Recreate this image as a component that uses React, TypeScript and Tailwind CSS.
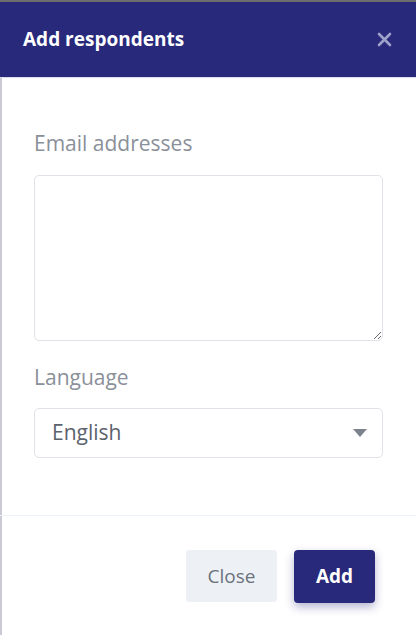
import React from 'react'

const font = { fontFamily: '"Open Sans", Lato, sans-serif' }

const CloseIcon = () => (
  <svg width="15" height="15" viewBox="0 0 15 15" className="text-[#9ea1c9]">
    <path d="M2 2 L13 13 M13 2 L2 13" stroke="currentColor" strokeWidth="2.6" strokeLinecap="round" />
  </svg>
)

const Caret = () => (
  <svg width="14" height="8" viewBox="0 0 14 8" className="text-[#7c838e]">
    <path d="M0 0 H14 L7 8 Z" fill="currentColor" />
  </svg>
)

const App = () => {
  return (
    <div
      className="w-[416px] h-[635px] flex flex-col bg-white border-t-2 border-[#6d6d6f] overflow-hidden"
      style={font}
    >
      <div className="h-[76px] shrink-0 bg-[#28297b] flex items-center justify-between pl-[23px] pr-[24px] border-b border-[#d9dcea]">
        <h2 className="text-[19px] font-bold text-white leading-none">Add respondents</h2>
        <CloseIcon />
      </div>

      <div className="flex-1 flex flex-col border-l-2 border-[#c9cad3] pl-[32px] pr-[33px] pt-[51px]">
        <label className="text-[21px] leading-[28px] text-[#8a9099]">Email addresses</label>
        <textarea className="mt-[18px] h-[166px] w-full rounded-[5px] border border-[#dfe2e7] bg-white outline-none" />

        <label className="mt-[22px] text-[21px] leading-[28px] text-[#8a9099]">Language</label>
        <div className="mt-[17px] h-[50px] w-full rounded-[5px] border border-[#dfe2e7] flex items-center justify-between pl-[17px] pr-[15px]">
          <span className="text-[21px] text-[#5b626c]">English</span>
          <Caret />
        </div>
      </div>

      <div className="h-[1px] shrink-0 bg-[#edf1f8]" />

      <div className="h-[119px] shrink-0 flex justify-end items-start gap-[17px] pt-[34px] pr-[41px] border-l-2 border-[#c9cad3]">
        <button className="w-[91px] h-[52px] rounded-[3px] bg-[#edf1f6] text-[19px] text-[#6b727c]">Close</button>
        <button className="w-[81px] h-[53px] rounded-[4px] bg-[#28297b] text-[19px] font-bold text-white shadow-[0_4px_10px_rgba(40,41,123,0.35)]">
          Add
        </button>
      </div>
    </div>
  )
}

export default App
